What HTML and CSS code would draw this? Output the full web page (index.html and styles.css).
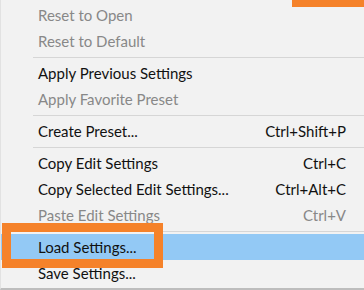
FILE: index.html
```html
<!DOCTYPE html>
<html>
<head>
<meta charset="utf-8">
<link rel="stylesheet" href="styles.css">
</head>
<body>
<div class="menu">
  <div class="item disabled"><span class="label">Reset to Open</span></div>
  <div class="item disabled"><span class="label">Reset to Default</span></div>
  <div class="sep"></div>
  <div class="item"><span class="label">Apply Previous Settings</span></div>
  <div class="item disabled"><span class="label">Apply Favorite Preset</span></div>
  <div class="sep"></div>
  <div class="item"><span class="label">Create Preset...</span><span class="key">Ctrl+Shift+P</span></div>
  <div class="sep"></div>
  <div class="item"><span class="label">Copy Edit Settings</span><span class="key">Ctrl+C</span></div>
  <div class="item"><span class="label">Copy Selected Edit Settings...</span><span class="key">Ctrl+Alt+C</span></div>
  <div class="item disabled"><span class="label">Paste Edit Settings</span><span class="key">Ctrl+V</span></div>
  <div class="sep"></div>
  <div class="item hover"><span class="label">Load Settings...</span></div>
  <div class="item"><span class="label">Save Settings...</span></div>
  <div class="topbar"></div>
  <div class="callout"></div>
</div>
</body>
</html>
```
FILE: styles.css
```css
html, body {
  margin: 0;
  padding: 0;
  background: #f2f2f2;
}
.menu {
  position: relative;
  width: 364px;
  height: 290px;
  box-sizing: border-box;
  padding-top: 2px;
  background: #f2f2f2;
  border-left: 1px solid #e2e2e2;
  border-bottom: 2px solid #bdbdbd;
  font-family: Lato, "Noto Sans", sans-serif;
  font-size: 15px;
  color: #111;
  overflow: hidden;
}
.item {
  height: 26px;
  display: flex;
  align-items: center;
  justify-content: space-between;
  padding: 0 18px 0 37px;
}
.item.disabled {
  color: #888;
}
.item.hover {
  background: #93c9f5;
}
.sep {
  height: 6px;
  margin-left: 32px;
  display: flex;
  align-items: center;
}
.sep::before {
  content: "";
  flex: 1;
  height: 1px;
  background: #d6d6d6;
}
.topbar {
  position: absolute;
  top: 0;
  right: 0;
  width: 72px;
  height: 7px;
  background: #f5822a;
}
.callout {
  position: absolute;
  left: 1px;
  top: 223px;
  width: 161px;
  height: 45px;
  box-sizing: border-box;
  border: 9px solid #f5822a;
}
```
